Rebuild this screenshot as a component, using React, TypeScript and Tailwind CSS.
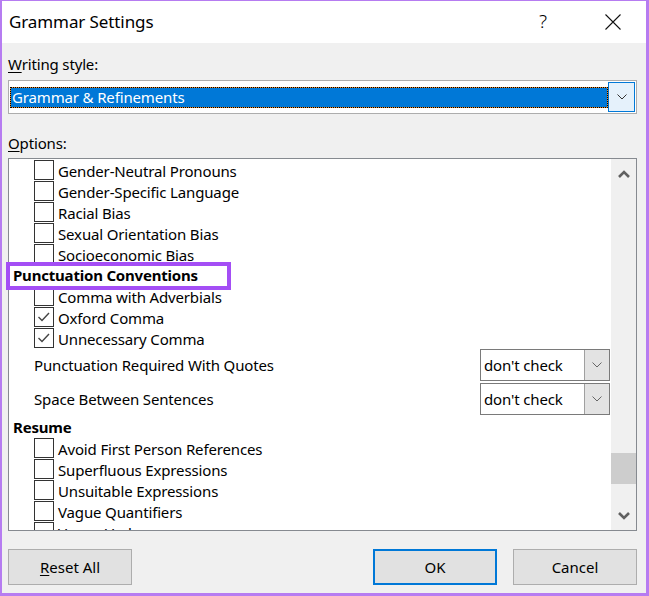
const font = "font-['Noto_Sans','Liberation_Sans',sans-serif]";

type Row =
  | { kind: "check"; label: string; checked?: boolean }
  | { kind: "head"; label: string }
  | { kind: "select"; label: string; value: string };

const rows: Row[] = [
  { kind: "check", label: "Gender-Neutral Pronouns" },
  { kind: "check", label: "Gender-Specific Language" },
  { kind: "check", label: "Racial Bias" },
  { kind: "check", label: "Sexual Orientation Bias" },
  { kind: "check", label: "Socioeconomic Bias" },
  { kind: "head", label: "Punctuation Conventions" },
  { kind: "check", label: "Comma with Adverbials" },
  { kind: "check", label: "Oxford Comma", checked: true },
  { kind: "check", label: "Unnecessary Comma", checked: true },
  { kind: "select", label: "Punctuation Required With Quotes", value: "don't check" },
  { kind: "select", label: "Space Between Sentences", value: "don't check" },
  { kind: "head", label: "Resume" },
  { kind: "check", label: "Avoid First Person References" },
  { kind: "check", label: "Superfluous Expressions" },
  { kind: "check", label: "Unsuitable Expressions" },
  { kind: "check", label: "Vague Quantifiers" },
  { kind: "check", label: "Vague Verbs" },
];

function SmallChevron({ color = "#333" }: { color?: string }) {
  return (
    <svg width="10" height="6" viewBox="0 0 10 6">
      <polyline points="0.5,0.5 5,5 9.5,0.5" fill="none" stroke={color} strokeWidth="1" />
    </svg>
  );
}

function Checkbox({ checked }: { checked?: boolean }) {
  return (
    <div className="w-[20px] h-[20px] mt-[1px] border border-[#333] bg-white flex items-center justify-center shrink-0">
      {checked && (
        <svg width="18" height="18" viewBox="0 0 18 18">
          <polyline points="3.5,9 7,12.5 14,5" fill="none" stroke="#444" strokeWidth="1.4" />
        </svg>
      )}
    </div>
  );
}

function ListRow({ row }: { row: Row }) {
  if (row.kind === "head") {
    return (
      <div className="h-[21px] flex items-center pl-[4px] pt-[1px] font-bold text-[15px] leading-[20px] tracking-[-0.2px]">
        {row.label}
      </div>
    );
  }
  if (row.kind === "select") {
    return (
      <div className="h-[34px] flex items-center pl-[25px] pr-[1px]">
        <span className="flex-1 text-[15px] leading-[20px] tracking-[-0.15px]">{row.label}</span>
        <div className="w-[130px] h-[32px] border border-[#7a7a7a] bg-white flex">
          <span className="flex-1 pl-[3px] flex items-center text-[15px] tracking-[-0.15px]">{row.value}</span>
          <div className="w-[25px] bg-[#e3e3e3] border-l border-[#a0a0a0] flex items-center justify-center">
            <SmallChevron color="#666" />
          </div>
        </div>
      </div>
    );
  }
  return (
    <div className="h-[21px] flex items-start pl-[25px] gap-[4px]">
      <Checkbox checked={row.checked} />
      <span className="text-[15px] leading-[21px] pt-[2px] tracking-[-0.15px]">{row.label}</span>
    </div>
  );
}

function ScrollChevron({ up }: { up?: boolean }) {
  return (
    <svg width="12" height="8" viewBox="0 0 12 8">
      <polyline
        points={up ? "1,7 6,2 11,7" : "1,1 6,6 11,1"}
        fill="none"
        stroke="#606060"
        strokeWidth="2.6"
      />
    </svg>
  );
}

function Button({ children, primary }: { children: React.ReactNode; primary?: boolean }) {
  return (
    <button
      className={`w-[124px] h-[36px] bg-[#e1e1e1] text-[15px] text-black ${
        primary ? "border-2 border-[#0078d7]" : "border border-[#adadad]"
      }`}
    >
      {children}
    </button>
  );
}

export default function App() {
  return (
    <div
      className={`w-[649px] h-[596px] flex flex-col border-t border-l-2 border-r-[3px] border-b-[3px] border-[#b67cf1] text-black ${font}`}
    >
      {/* Title bar */}
      <div className="h-[42px] bg-white flex items-center pl-[7px] shrink-0">
        <span className="text-[17px] flex-1 pb-[1px] tracking-[-0.1px]">Grammar Settings</span>
        <span className="text-[19px] font-light w-[14px] mr-[52px] pb-[2px]">?</span>
        <svg width="16" height="16" viewBox="0 0 16 16" className="mr-[25px]">
          <path d="M0.5 0.5 L15.5 15.5 M15.5 0.5 L0.5 15.5" stroke="#111" strokeWidth="1.1" />
        </svg>
      </div>

      {/* Body */}
      <div className="flex-1 bg-[#f0f0f0] pl-[6px] pr-[9px] flex flex-col">
        <div className="mt-[11px] text-[15px] leading-[20px] tracking-[-0.15px]">
          <span className="underline underline-offset-2">W</span>riting style:
        </div>

        <div className="mt-[6px] h-[34px] border border-[#adadad] bg-white flex items-center pl-[1px] pr-[1px]">
          <div className="flex-1 bg-[#e88a2c]">
            <div className="h-[21px] border border-dotted border-black bg-[#0078d7] bg-clip-padding text-white text-[15px] leading-[19px] pl-[1px] tracking-[-0.15px]">
              Grammar &amp; Refinements
            </div>
          </div>
          <div className="w-[27px] h-[30px] bg-[#e5f1fb] border border-[#0078d7] flex items-center justify-center">
            <SmallChevron />
          </div>
        </div>

        <div className="mt-[19px] text-[15px] leading-[20px] tracking-[-0.15px]">
          <span className="underline underline-offset-2">O</span>ptions:
        </div>

        {/* Options list */}
        <div className="relative mt-[5px] h-[373px] border border-[#868a90] bg-white flex">
          <div className="flex-1 overflow-hidden">
            {rows.map((r) => (
              <ListRow key={r.label} row={r} />
            ))}
          </div>
          <div className="w-[25px] bg-[#f0f0f0] flex flex-col items-center">
            <div className="h-[27px] flex items-center justify-center pt-[2px]">
              <ScrollChevron up />
            </div>
            <div className="flex-1 w-full relative">
              <div className="absolute left-0 right-0 top-[267px] h-[31px] bg-[#cdcdcd]" />
            </div>
            <div className="h-[27px] flex items-center justify-center pb-[2px]">
              <ScrollChevron />
            </div>
          </div>

          {/* highlight annotation */}
          <div className="absolute left-[-3px] top-[103px] w-[225px] h-[28px] border-4 border-[#a44ef5]" />
        </div>

        <div className="mt-[18px] flex items-center">
          <Button>
            <span className="underline underline-offset-2">R</span>eset All
          </Button>
          <div className="flex-1" />
          <Button primary>OK</Button>
          <div className="w-[16px]" />
          <Button>Cancel</Button>
        </div>
      </div>
    </div>
  );
}
